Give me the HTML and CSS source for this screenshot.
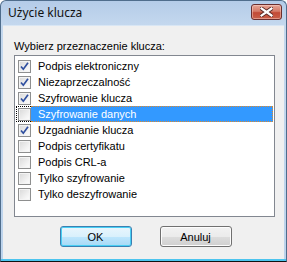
FILE: index.html
```html
<!DOCTYPE html>
<html lang="pl">
<head>
  <meta charset="UTF-8" />
  <title>Użycie klucza</title>
  <link rel="stylesheet" href="styles.css">
</head>
<body>

<div class="window">
  <div class="title-bar">
    <span class="title">Użycie klucza</span>
    <button class="close-btn" aria-label="Zamknij">
      <svg width="13" height="10" viewBox="0 0 13 10">
        <path d="M1.5 1.5 L11.5 8.5 M11.5 1.5 L1.5 8.5" stroke="#5a2a26" stroke-width="4" stroke-linecap="square"/>
        <path d="M1.5 1.5 L11.5 8.5 M11.5 1.5 L1.5 8.5" stroke="#fff" stroke-width="2.2" stroke-linecap="square"/>
      </svg>
    </button>
  </div>

  <div class="client">
    <div class="prompt">Wybierz przeznaczenie klucza:</div>

    <div class="list">
      <div class="row"><span class="cell-check"><span class="box checked"></span></span><span class="label">Podpis elektroniczny</span></div>
      <div class="row"><span class="cell-check"><span class="box checked"></span></span><span class="label">Niezaprzeczalność</span></div>
      <div class="row"><span class="cell-check"><span class="box checked"></span></span><span class="label">Szyfrowanie klucza</span></div>
      <div class="row selected"><span class="cell-check"><span class="box"></span></span><span class="label">Szyfrowanie danych</span></div>
      <div class="row"><span class="cell-check"><span class="box checked"></span></span><span class="label">Uzgadnianie klucza</span></div>
      <div class="row"><span class="cell-check"><span class="box"></span></span><span class="label">Podpis certyfikatu</span></div>
      <div class="row"><span class="cell-check"><span class="box"></span></span><span class="label">Podpis CRL-a</span></div>
      <div class="row"><span class="cell-check"><span class="box"></span></span><span class="label">Tylko szyfrowanie</span></div>
      <div class="row"><span class="cell-check"><span class="box"></span></span><span class="label">Tylko deszyfrowanie</span></div>
    </div>

    <div class="buttons">
      <button class="btn default">OK</button>
      <button class="btn">Anuluj</button>
    </div>
  </div>
</div>

</body>
</html>
```

FILE: styles.css
```css
body {
  margin: 0;
  background: #ffffff;
  font-family: "Liberation Sans", Arial, sans-serif;
  font-size: 11px;
  color: #000;
}

.window {
  width: 287px;
  height: 262px;
  box-sizing: border-box;
  display: flex;
  flex-direction: column;
  border: 1px solid #4f6d8c;
  border-bottom-color: #111;
  border-radius: 6px 6px 0 0;
  background: linear-gradient(#b4cce8, #c4d8ee 24px, #bcd3ec);
  padding: 0 2px 2px 2px;
  box-shadow: inset 0 -2px 0 #4cc4ee;
}

.title-bar {
  height: 24px;
  display: flex;
  align-items: center;
  justify-content: space-between;
  padding: 0 2px 0 5px;
}

.title {
  font-family: "Noto Sans", "Open Sans", sans-serif;
  font-size: 12px;
  color: #111;
  margin-top: -2px;
}

.close-btn {
  width: 31px;
  height: 16px;
  margin-top: -3px;
  padding: 0;
  display: flex;
  align-items: center;
  justify-content: center;
  border: 1px solid #6a2e2e;
  border-radius: 3px;
  background: linear-gradient(#e6a595, #d57a67 45%, #c24a36 55%, #c9604a);
  box-shadow: inset 0 0 0 1px rgba(255, 220, 210, 0.45);
}

.client {
  flex: 1;
  background: #f0f0f0;
  border-top: 1px solid #d9e6f4;
  padding: 13px 9px 0 11px;
  display: flex;
  flex-direction: column;
}

.prompt {
  line-height: 14px;
  height: 16px;
}

.list {
  height: 162px;
  box-sizing: border-box;
  border: 1px solid #828790;
  background: #fff;
  padding: 2px 1px 0 1px;
}

.row {
  display: flex;
  height: 16px;
  width: 257px;
}

.cell-check {
  width: 15px;
  box-sizing: border-box;
  display: flex;
  align-items: center;
  padding-left: 2px;
}

.label {
  flex: 1;
  box-sizing: border-box;
  padding-left: 7px;
  line-height: 16px;
  white-space: nowrap;
}

.row.selected .cell-check {
  border: 1px dotted #000;
  border-right: none;
  padding-left: 1px;
}

.row.selected .label {
  background: #3399ff;
  color: #fff;
  border: 1px dotted #e0892a;
  border-left: none;
  line-height: 14px;
}

.box {
  width: 13px;
  height: 13px;
  box-sizing: border-box;
  border: 1px solid #8e8f8f;
  background: linear-gradient(135deg, #d8d8d8, #f4f4f4 70%, #fdfdfd);
  box-shadow: inset 0 0 0 1px #f4f4f4;
}

.box.checked {
  background:
    url("data:image/svg+xml,%3Csvg xmlns='http://www.w3.org/2000/svg' width='11' height='11' viewBox='0 0 11 11'%3E%3Cpath d='M2 5.5 L4.3 8.2 L9 1.8' fill='none' stroke='%232f4f9f' stroke-width='1.7'/%3E%3C/svg%3E") center/11px 11px no-repeat,
    linear-gradient(135deg, #d8d8d8, #f4f4f4 70%, #fdfdfd);
}

.buttons {
  display: flex;
  justify-content: center;
  gap: 28px;
  margin-top: 9px;
  padding-left: 2px;
}

.btn {
  width: 72px;
  height: 21px;
  padding: 0;
  font-family: "Liberation Sans", Arial, sans-serif;
  font-size: 11px;
  color: #000;
  border: 1px solid #707070;
  border-radius: 3px;
  background: linear-gradient(#f2f2f2, #ebebeb 50%, #dddddd 50%, #cfcfcf);
  box-shadow: inset 0 0 0 1px #fcfcfc;
}

.btn.default {
  border-color: #3c7fb1;
  background: linear-gradient(#e9f6fd, #d9f0fc 50%, #bee6fd 50%, #a7d9f5);
  box-shadow: inset 0 0 0 1px #48cff4;
}
```
